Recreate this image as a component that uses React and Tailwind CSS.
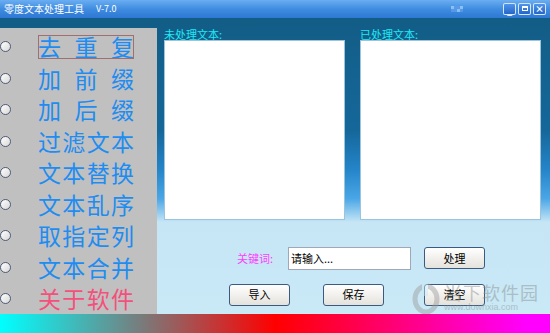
import React from 'react'

const CJK = { fontFamily: '"Noto Sans CJK SC", "Noto Sans", sans-serif' }

const items = [
  { label: '去重复', focus: true },
  { label: '加前缀' },
  { label: '加后缀' },
  { label: '过滤文本' },
  { label: '文本替换' },
  { label: '文本乱序' },
  { label: '取指定列' },
  { label: '文本合并' },
  { label: '关于软件', pink: true },
]

function WinButton({ children }) {
  return (
    <div className="w-[13px] h-[12px] rounded-[2px] border border-white/80 bg-gradient-to-b from-[#4f94ec] to-[#2466c8] flex items-center justify-center text-white text-[9px] font-bold leading-none">
      {children}
    </div>
  )
}

function Button({ children }) {
  return (
    <button className="w-[61px] h-[22px] rounded-[3px] border border-[#3c5a80] bg-gradient-to-b from-white to-[#e4e2dc] text-[11px] text-black leading-none flex items-center justify-center">
      {children}
    </button>
  )
}

export default function App() {
  return (
    <div className="w-[550px] h-[333px] overflow-hidden relative flex flex-col" style={CJK}>
      {/* Title bar */}
      <div className="h-[18px] flex items-center bg-gradient-to-b from-[#6aaef2] via-[#3f8ce0] to-[#2c78d4] px-[4px]">
        <span className="text-white text-[10px] leading-none">零度文本处理工具</span>
        <span className="text-white text-[9px] leading-none ml-[12px]">V-7.0</span>
        <div className="ml-auto mr-[40px] grid grid-cols-4 gap-0 opacity-70">
          {[0, 1, 2, 3, 4, 5, 6, 7].map((i) => (
            <div key={i} className={`w-[3px] h-[3px] ${i % 3 === 0 ? 'bg-[#a8d4ff]' : 'bg-[#5fa0ea]'}`} />
          ))}
        </div>
        <div className="flex gap-[2px]">
          <WinButton><span className="mt-[4px]">_</span></WinButton>
          <WinButton><span className="block w-[6px] h-[5px] border border-white border-t-2" /></WinButton>
          <WinButton>×</WinButton>
        </div>
      </div>

      {/* Main */}
      <div className="flex-1 flex bg-[linear-gradient(to_bottom,#125d86_0%,#15679a_38%,#2484c8_51%,#4aa6e6_61%,#c6e6f6_69%,#c9e9f7_100%)]">
        {/* Left menu */}
        <div className="w-[157px] pt-[10px] flex flex-col">
          <div className="flex-1 bg-[#c0c0c0] flex flex-col pt-[3px]">
            {items.map((it) => (
              <div key={it.label} className="h-[31.5px] flex items-center">
                <div className="w-[11px] h-[11px] rounded-full border border-[#4e5c76] bg-gradient-to-br from-white to-[#d8d8d8]" />
                <div
                  className={`ml-[27px] w-[96px] h-[24px] flex justify-between items-center text-[23px] leading-none ${
                    it.pink ? 'text-[#f4507c]' : 'text-[#1e8cf0]'
                  } ${it.focus ? 'outline outline-1 outline-[#a07070] -outline-offset-1' : ''}`}
                >
                  {it.label.split('').map((c, i) => (
                    <span key={i}>{c}</span>
                  ))}
                </div>
              </div>
            ))}
          </div>
        </div>

        {/* Right area */}
        <div className="flex-1 flex flex-col pl-[7px] pt-[10px]">
          <div className="flex gap-[15px]">
            <div className="flex flex-col">
              <span className="h-[12px] text-[11px] leading-[12px] text-[#20e8f4]">未处理文本:</span>
              <div className="w-[181px] h-[180px] bg-white border border-[#9cc4dc]" />
            </div>
            <div className="flex flex-col">
              <span className="h-[12px] text-[11px] leading-[12px] text-[#20e8f4]">已处理文本:</span>
              <div className="w-[181px] h-[180px] bg-white border border-[#9cc4dc]" />
            </div>
          </div>

          <div className="flex items-center mt-[27px] h-[23px]">
            <span className="ml-[73px] w-[51px] text-[11px] text-[#ff3cff] leading-none">关键词:</span>
            <div className="w-[123px] h-[23px] bg-white border border-[#a0a8b8] flex items-center px-[2px] text-[11px] text-black">
              请输入...
            </div>
            <div className="ml-[13px]">
              <Button>处理</Button>
            </div>
          </div>

          <div className="flex items-center mt-[14px]">
            <div className="ml-[65px]"><Button>导入</Button></div>
            <div className="ml-[33px]"><Button>保存</Button></div>
            <div className="ml-[40px]"><Button>清空</Button></div>
          </div>
        </div>
      </div>

      {/* Bottom strip */}
      <div className="h-[19px] bg-[linear-gradient(to_right,#00ffff_0%,#7a7a7a_26%,#ff0000_50%,#ff0040_62%,#ff00ff_96%)]" />

      {/* Watermark */}
      <div className="absolute left-[412px] top-[282px] flex items-start opacity-45 pointer-events-none">
        <svg width="28" height="32" viewBox="0 0 28 32">
          <ellipse cx="14" cy="17" rx="11" ry="13" fill="none" stroke="#9a9a9a" strokeWidth="5" />
          <rect x="10" y="0" width="6" height="14" fill="#c8e8f6" />
        </svg>
        <div className="flex flex-col ml-[4px]">
          <span className="text-[18px] leading-[20px] text-[#8a8a8a] tracking-[1px]">当下软件园</span>
          <span className="text-[9px] leading-[10px] text-[#8a8a8a]" style={{ fontFamily: '"Liberation Sans", sans-serif' }}>www.downxia.com</span>
        </div>
      </div>
    </div>
  )
}
